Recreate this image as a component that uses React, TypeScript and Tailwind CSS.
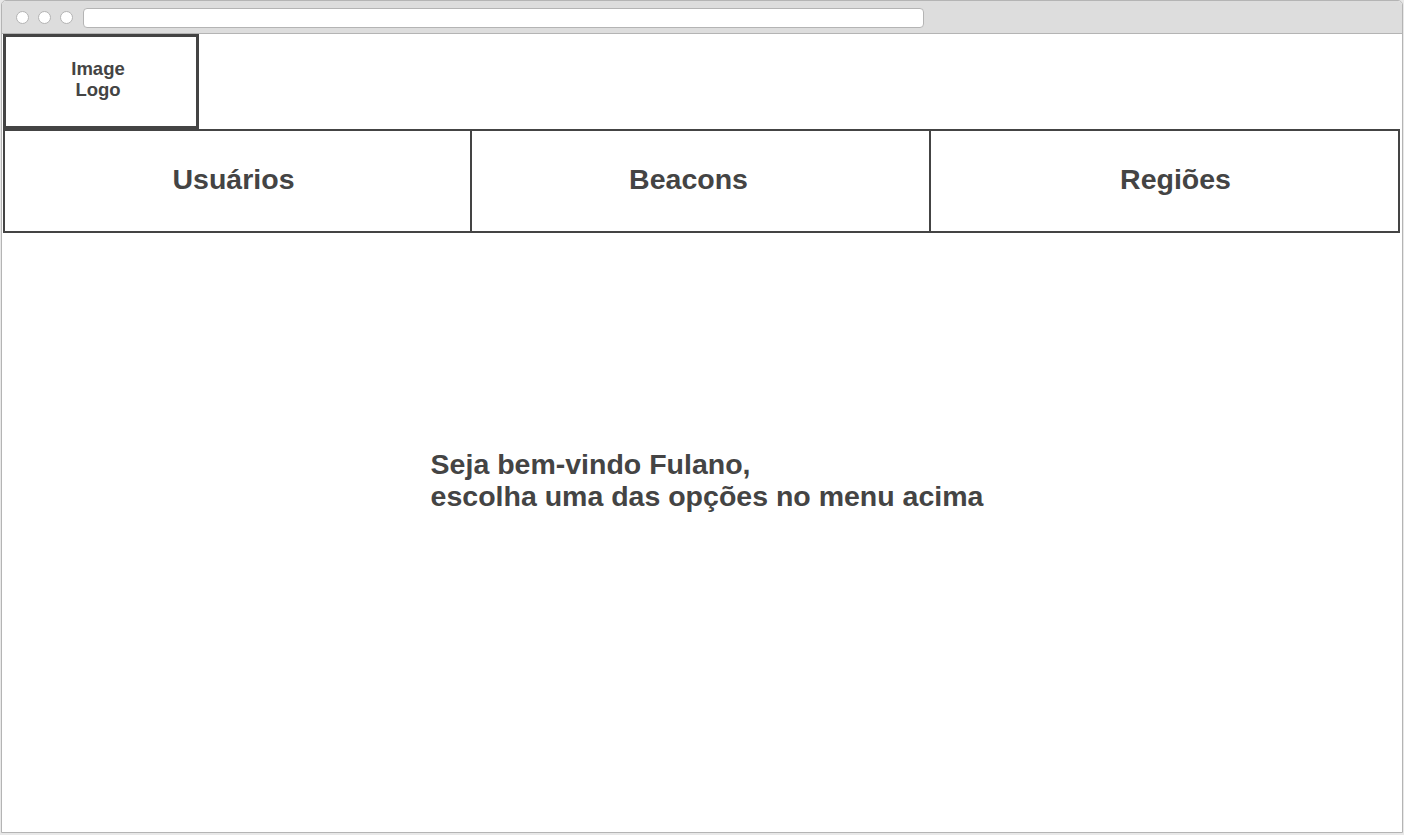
import React from 'react';

const tabs = [
  { label: 'Usuários', cls: 'w-[465px] pr-[8px]' },
  { label: 'Beacons', cls: 'w-[459px] border-l-2 border-[#444] pr-[24px]' },
  { label: 'Regiões', cls: 'flex-1 border-l-2 border-[#444] pl-[22px]' },
];

export default function App() {
  return (
    <div
      className="w-[1404px] h-[835px] bg-[#e8e8e8] overflow-hidden"
      style={{ fontFamily: '"Liberation Sans", Arial, sans-serif' }}
    >
      <div className="ml-[1px] w-[1402px] h-[833px] bg-white border border-[#b4b4b4] rounded-t-[5px] flex flex-col overflow-hidden">
        {/* browser chrome */}
        <div className="h-[33px] bg-[#dddddd] border-b border-[#b4b4b4] flex items-center pl-[14px] pt-[1px] gap-[9px] shrink-0">
          <span className="w-[13px] h-[13px] rounded-full bg-white border border-[#b4b4b4]" />
          <span className="w-[13px] h-[13px] rounded-full bg-white border border-[#b4b4b4]" />
          <span className="w-[13px] h-[13px] rounded-full bg-white border border-[#b4b4b4]" />
          <span className="ml-[1px] w-[841px] h-[20px] bg-white rounded-[4px] border border-[#b4b4b4]" />
        </div>

        <div className="flex-1 flex flex-col pl-[1px] pr-[2px] text-[#444]">
          {/* logo */}
          <div className="w-[196px] h-[95px] border-[3px] border-[#444] flex items-center justify-center text-center font-bold text-[18.5px] leading-[21px] pr-[6px] pb-[5px]">
            Image<br />Logo
          </div>

          {/* menu */}
          <nav className="h-[104px] border-2 border-[#444] flex">
            {tabs.map((t) => (
              <div key={t.label} className={`${t.cls} flex items-center justify-center font-bold text-[28.5px] pb-[4px]`}>
                {t.label}
              </div>
            ))}
          </nav>

          {/* welcome */}
          <div className="flex justify-center pt-[215px]">
            <p className="font-bold text-[28.5px] leading-[32px] ml-[11px]">
              Seja bem-vindo Fulano,<br />
              escolha uma das opções no menu acima
            </p>
          </div>
        </div>
      </div>
    </div>
  );
}
